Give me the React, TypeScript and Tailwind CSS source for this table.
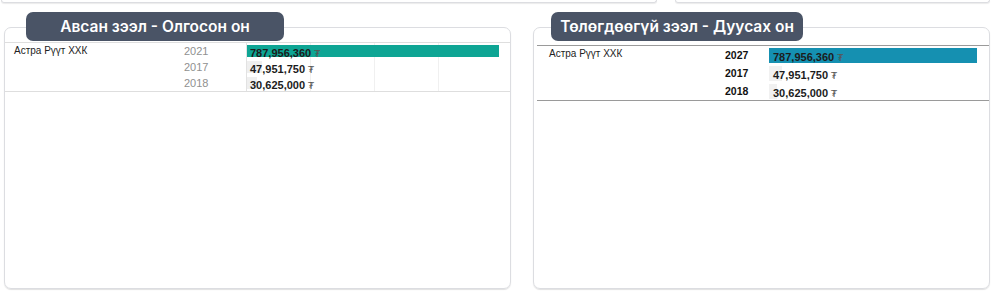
import React from "react";

type Row = { name: string; year: string; amount: number };

const rowsLeft: Row[] = [
  { name: "Астра Рүүт ХХК", year: "2021", amount: 787956360 },
  { name: "", year: "2017", amount: 47951750 },
  { name: "", year: "2018", amount: 30625000 },
];

const rowsRight: Row[] = [
  { name: "Астра Рүүт ХХК", year: "2027", amount: 787956360 },
  { name: "", year: "2017", amount: 47951750 },
  { name: "", year: "2018", amount: 30625000 },
];

const fmt = (n: number) => n.toLocaleString("en-US");

function Pill({ title, offset, width }: { title: string; offset: string; width: string }) {
  return (
    <div
      className={`absolute top-[-16px] ${offset} ${width} h-[29px] rounded-[7px] bg-[#4a5466] flex items-center justify-center text-white text-[15.5px] font-semibold font-['Inter',sans-serif]`}
    >
      {title}
    </div>
  );
}

function Amount({ value }: { value: number }) {
  return (
    <span className="relative whitespace-nowrap text-[11px] font-bold text-[#1c1c1c] font-['Liberation_Sans',Arial,sans-serif]">
      {fmt(value)}
      <span className="ml-[3px] text-[9.5px] font-normal text-[#555] font-['DejaVu_Sans',sans-serif]">₮</span>
    </span>
  );
}

function LeftTable() {
  const max = Math.max(...rowsLeft.map((r) => r.amount));
  return (
    <div className="mt-[14px] border-t border-b border-[#dedede]">
      {rowsLeft.map((r, i) => (
        <div key={i} className="grid grid-cols-[179px_62px_254px_10px] h-[16px] items-center">
          <div className="pl-[9px] text-[10px] text-[#222] font-['Liberation_Sans',Arial,sans-serif] leading-none">
            {r.name}
          </div>
          <div className="text-[11px] text-[#909090] font-['Liberation_Sans',Arial,sans-serif] leading-none">
            {r.year}
          </div>
          <div className="relative h-full flex items-center border-l border-[#e2e2e2] bg-[repeating-linear-gradient(90deg,transparent_0_63px,#f0f0f0_63px_64px)]">
            <div
              className={`absolute left-0 h-[12px] ${i === 0 ? "bg-[#0ea594]" : "bg-[#efefef]"}`}
              style={{ width: `${(r.amount / max) * 252}px` }}
            />
            <div className="pl-[3px] leading-none">
              <Amount value={r.amount} />
            </div>
          </div>
          <div />
        </div>
      ))}
    </div>
  );
}

function RightTable() {
  const max = Math.max(...rowsRight.map((r) => r.amount));
  return (
    <div className="mt-[17px] ml-[3px] border-t border-b border-[#9a9a9a]">
      {rowsRight.map((r, i) => (
        <div key={i} className="grid grid-cols-[188px_44px_208px_12px] h-[18px] items-center">
          <div className="pl-[12px] text-[10px] text-[#222] font-['Liberation_Sans',Arial,sans-serif] leading-none self-start pt-[3px]">
            {r.name}
          </div>
          <div className="text-[10.5px] font-bold text-[#111] font-['Liberation_Sans',Arial,sans-serif] leading-none">
            {r.year}
          </div>
          <div className="relative h-full flex items-center">
            <div
              className={`absolute left-0 h-[15px] ${i === 0 ? "bg-[#1590b1]" : "bg-[#f1f1f1]"}`}
              style={{ width: `${(r.amount / max) * 208}px` }}
            />
            <div className="pl-[4px] leading-none">
              <Amount value={r.amount} />
            </div>
          </div>
          <div />
        </div>
      ))}
    </div>
  );
}

export default function App() {
  return (
    <div className="w-[1000px] h-[300px] bg-white overflow-hidden">
      <div className="flex h-[4px]">
        <div className="ml-[1px] w-[656px] h-[3px] border border-t-0 border-[#dcdde1] rounded-b-[6px] shadow-[0_1px_1px_rgba(0,0,0,0.08)]" />
        <div className="ml-[18px] w-[315px] h-[3px] border border-t-0 border-[#dcdde1] rounded-b-[6px] shadow-[0_1px_1px_rgba(0,0,0,0.08)]" />
      </div>
      <div className="mt-[23px] flex">
        <div className="relative ml-[4px] w-[507px] h-[262px] border border-[#dcdde1] rounded-[7px] shadow-[0_1px_1px_rgba(0,0,0,0.12)]">
          <Pill title="Авсан зээл - Олгосон он" offset="left-[21px]" width="w-[258px]" />
          <LeftTable />
        </div>
        <div className="relative ml-[22px] w-[457px] h-[262px] border border-[#dcdde1] rounded-[7px] shadow-[0_1px_1px_rgba(0,0,0,0.12)]">
          <Pill title="Төлөгдөөгүй зээл - Дуусах он" offset="left-[17px]" width="w-[252px]" />
          <RightTable />
        </div>
      </div>
    </div>
  );
}
